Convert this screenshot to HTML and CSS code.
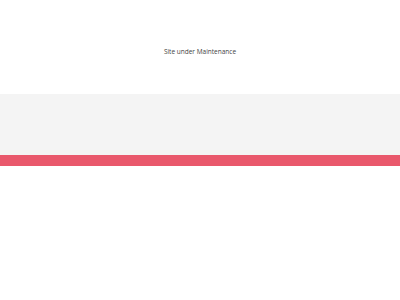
FILE: index.html
```html
<!DOCTYPE html>
<html lang="en">
<head>
    <meta charset="UTF-8">
    <title>Site under Maintenance</title>
    <link rel="stylesheet" href="styles.css">
</head>
<body>
<header class="top">
    <p class="notice">Site under Maintenance</p>
</header>
<section class="band"></section>
<div class="stripe"></div>
</body>
</html>
```

FILE: styles.css
```css
* {
    box-sizing: border-box;
}

body {
    margin: 0;
    background: #fff;
    font-family: "Open Sans", sans-serif;
}

.top {
    height: 94px;
    padding-top: 47px;
    text-align: center;
}

.notice {
    margin: 0;
    font-size: 6.5px;
    line-height: 10px;
    color: #444;
}

.band {
    height: 61px;
    background: #f4f4f4;
}

.stripe {
    height: 11px;
    background: #e9586c;
}
```
